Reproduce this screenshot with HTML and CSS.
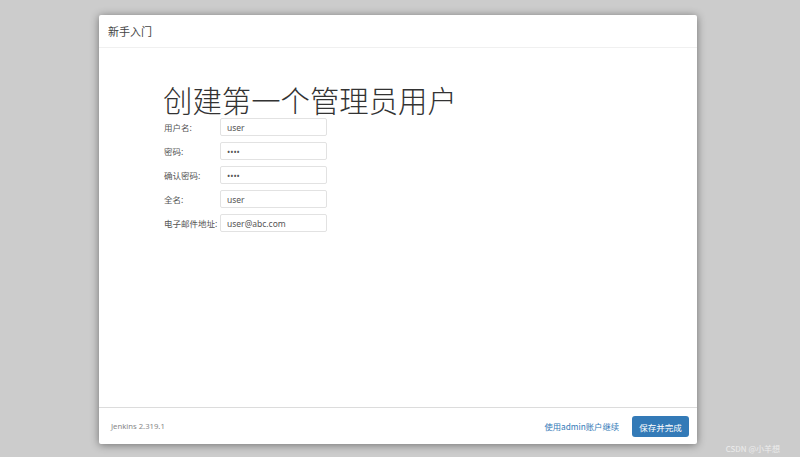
FILE: index.html
```html
<!DOCTYPE html>
<html lang="zh">
<head>
<meta charset="utf-8">
<title>新手入门</title>
<link rel="stylesheet" href="styles.css">
</head>
<body>
<div class="panel">
  <div class="panel-header">新手入门</div>
  <div class="panel-body">
    <h1 class="title">创建第一个管理员用户</h1>
    <form class="form">
      <div class="row"><label class="label">用户名:</label><input class="input" type="text" value="user"></div>
      <div class="row"><label class="label">密码:</label><input class="input" type="password" value="user"></div>
      <div class="row"><label class="label">确认密码:</label><input class="input" type="password" value="user"></div>
      <div class="row"><label class="label">全名:</label><input class="input" type="text" value="user"></div>
      <div class="row"><label class="label">电子邮件地址:</label><input class="input" type="text" value="user@abc.com"></div>
    </form>
  </div>
  <div class="panel-footer">
    <span class="version">Jenkins 2.319.1</span>
    <div class="actions">
      <a class="link" href="#">使用admin账户继续</a>
      <button class="btn" type="button">保存并完成</button>
    </div>
  </div>
</div>
<div class="watermark">CSDN @小羊想</div>
</body>
</html>
```

FILE: styles.css
```css
html, body {
  margin: 0;
  padding: 0;
  height: 100%;
}
body {
  background: #cccccc;
  font-family: "Noto Sans CJK SC", "Noto Sans", "Liberation Sans", sans-serif;
  color: #333;
  overflow: hidden;
  position: relative;
}
.panel {
  width: 598px;
  height: 429px;
  margin: 15px 0 0 99px;
  background: #fff;
  border-radius: 2px;
  box-shadow: 0 1px 8px rgba(0, 0, 0, 0.45);
  display: flex;
  flex-direction: column;
}
.panel-header {
  height: 32px;
  border-bottom: 1px solid #f0f0f0;
  padding-left: 9px;
  font-size: 11px;
  line-height: 33px;
  color: #444;
}
.panel-body {
  flex: 1;
  padding: 35px 0 0 64px;
  border-bottom: 1px solid #dcdcdc;
}
.title {
  margin: 0 0 3px;
  font-size: 29.4px;
  line-height: 32px;
  font-weight: 300;
  color: #333;
}
.form {
  display: flex;
  flex-direction: column;
  gap: 6px;
}
.row {
  display: flex;
  align-items: center;
  height: 18px;
}
.label {
  width: 56px;
  font-size: 8.5px;
  color: #555;
  padding-left: 1px;
  white-space: nowrap;
}
.input {
  box-sizing: border-box;
  width: 107px;
  height: 18px;
  margin: 0;
  padding: 0 6px;
  border: 1px solid #e2e2e2;
  border-radius: 2px;
  font-family: "Noto Sans", "Liberation Sans", sans-serif;
  font-size: 8.5px;
  color: #555;
  background: #fff;
  outline: none;
}
.panel-footer {
  height: 36px;
  display: flex;
  align-items: center;
  justify-content: space-between;
  padding: 0 8px 0 12px;
}
.version {
  font-size: 7.7px;
  color: #888;
  font-family: "Noto Sans", "Liberation Sans", sans-serif;
}
.actions {
  display: flex;
  align-items: center;
  gap: 13px;
}
.link {
  font-size: 8.3px;
  color: #337ab7;
  text-decoration: none;
}
.btn {
  width: 57px;
  height: 21px;
  border: none;
  border-radius: 3px;
  background: #337ab7;
  color: #fff;
  font-family: "Noto Sans CJK SC", sans-serif;
  font-size: 8.5px;
  padding: 0;
  margin-top: 1px;
}
.watermark {
  position: absolute;
  right: 20px;
  bottom: 3px;
  font-size: 8px;
  color: #ececec;
  font-family: "Noto Sans CJK SC", "Noto Sans", sans-serif;
}
```
